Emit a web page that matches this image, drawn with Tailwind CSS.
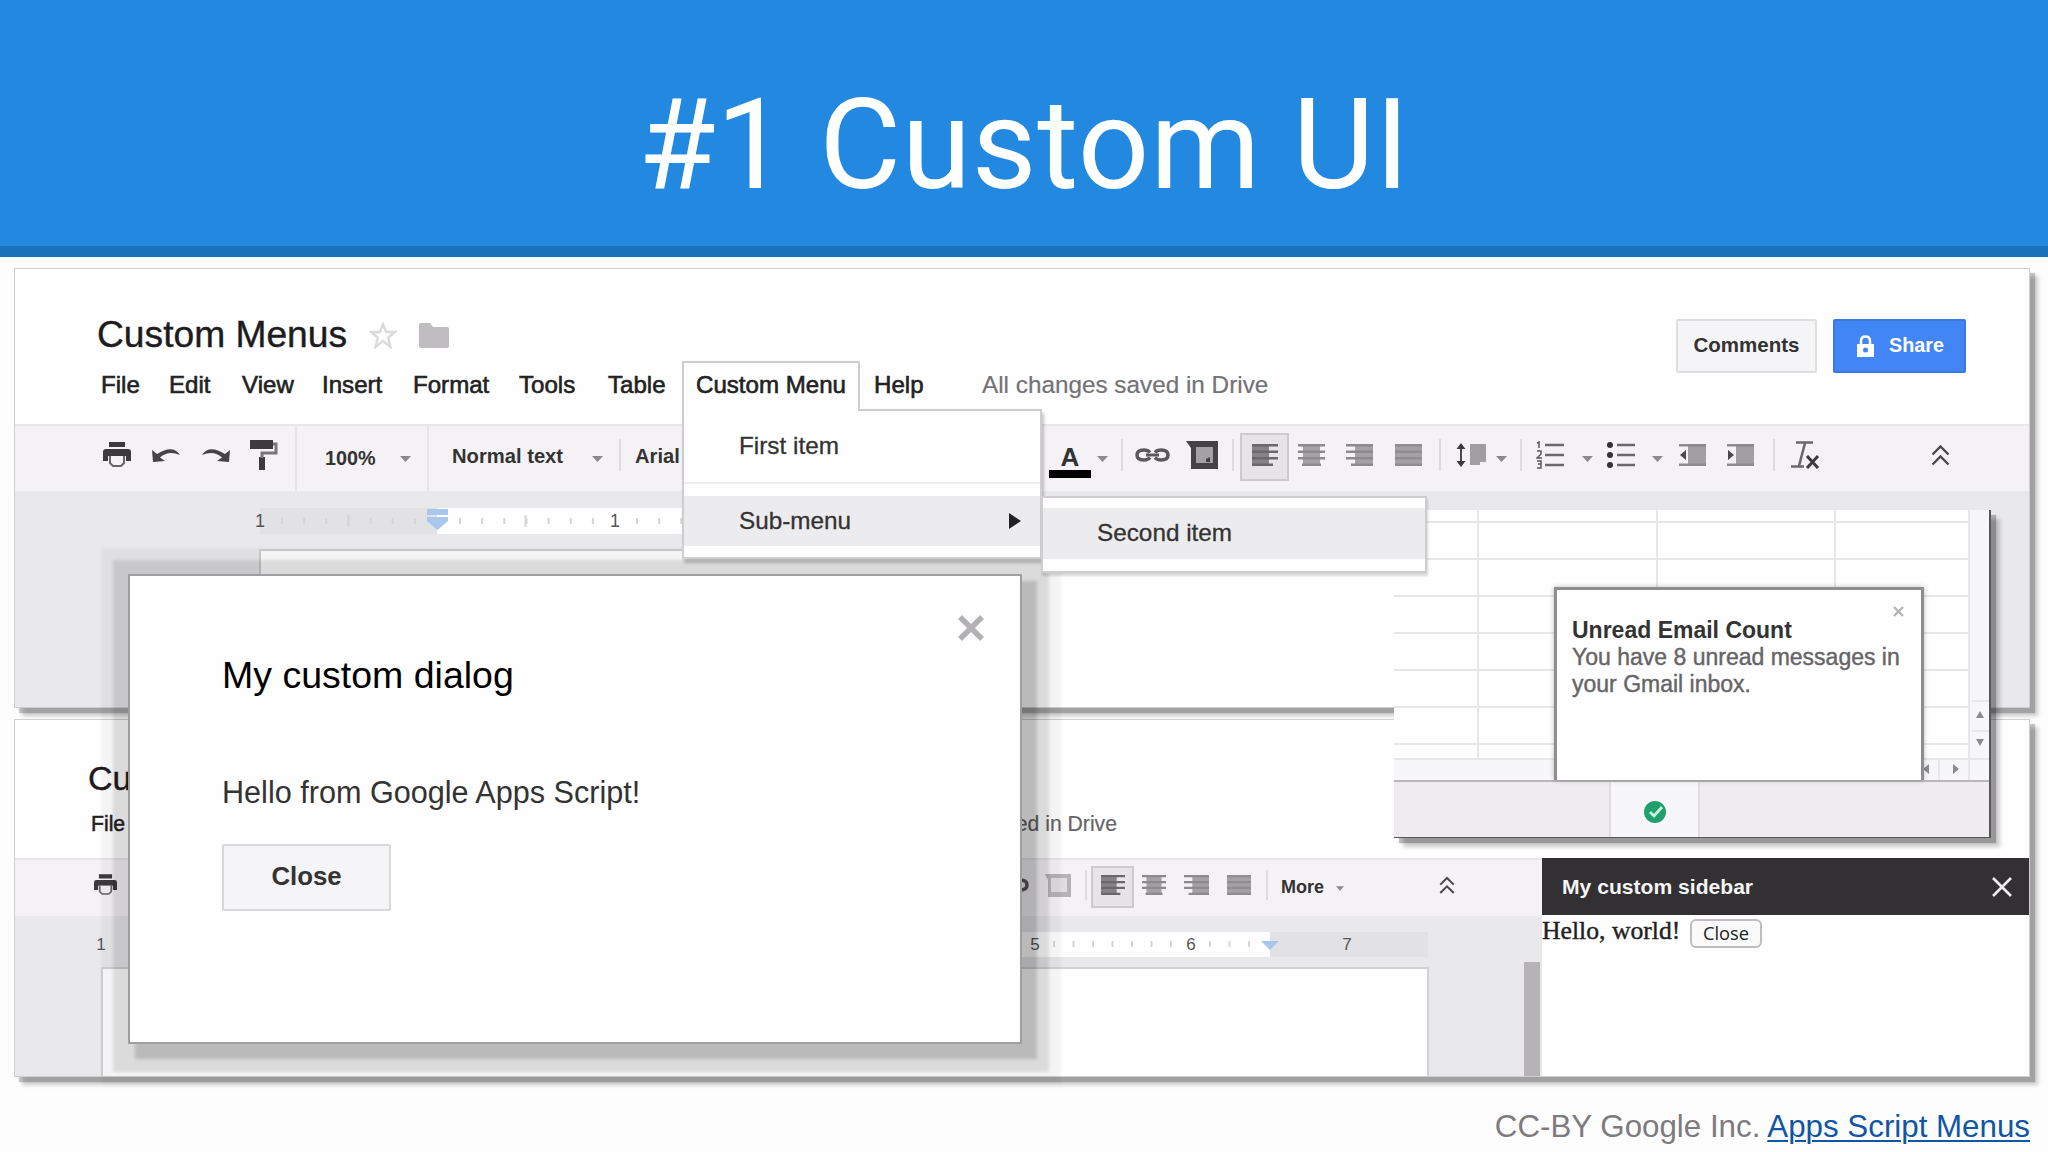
<!DOCTYPE html>
<html lang="en">
<head>
<meta charset="utf-8">
<title>#1 Custom UI</title>
<script src="https://cdn.jsdelivr.net/npm/@tailwindcss/browser@4"></script>
</head>
<body class="relative w-[2048px] h-[1152px] overflow-hidden bg-[#fdfdfd] font-['Liberation_Sans',Arial,sans-serif] leading-none text-[#222] whitespace-nowrap">

<!-- shared icons -->
<svg class="hidden">
  <symbol id="print" viewBox="0 0 28 26"><path fill="#3c3a3d" d="M6 0h16v5H6zM3 7h22q3 0 3 3v9h-5v-5H5v5H0v-9q0-3 3-3z"/><path d="M7 14v7l3 3h8l3-3v-7" fill="#f4f2f5" stroke="#666" stroke-width="2"/></symbol>
  <symbol id="undo" viewBox="0 0 30 18"><path fill="#444" d="M1 4l1 12 12-1-5-3.500Q17 4 29 9 22-2 6 8z"/></symbol>
  <symbol id="roller" viewBox="0 0 30 32"><path fill="#3c3a3d" d="M1 1h23v9H1zM10 18h6v13h-6z"/><path fill="none" stroke="#777" stroke-width="3" d="M24 5h3v9H13v5"/></symbol>
  <symbol id="caret" viewBox="0 0 11 6"><path fill="#8c8a8d" d="M0 0h11L5.500 6z"/></symbol>
  <symbol id="link" viewBox="0 0 35 14"><g fill="none" stroke="#5a585b" stroke-width="3.500"><path d="M15 4.500Q13 2 9 2 2 2 2 7t7 5q4 0 6-2.500M20 4.500Q22 2 26 2q7 0 7 5t-7 5q-4 0-6-2.500"/><path d="M11 7h13" stroke-width="3"/></g></symbol>
  <symbol id="comment" viewBox="0 0 32 28"><path fill="#444245" d="M0 0h32v28H5V7z"/><path fill="#a3a1a4" d="M10 6h17v16H10z"/><path fill="#444245" d="M20 18l4-2v5h-4z"/></symbol>
  <symbol id="left" viewBox="0 0 26 22" preserveAspectRatio="none"><path fill="#858386" d="M0 0h17v22H0z"/><path fill="#6a686b" d="M0 0h26v2.500H0zM0 6.500h26V9H0zM0 13h26v2.500H0zM0 19.500h21V22H0z"/></symbol>
  <symbol id="center" viewBox="0 0 27 22" preserveAspectRatio="none"><path fill="#a3a1a4" d="M5 0h17v22H5z"/><path fill="#8c8a8d" d="M0 0h27v2.500H0zM0 6.500h27V9H0zM0 13h27v2.500H0zM4 19.500h19V22H4z"/></symbol>
  <symbol id="right" viewBox="0 0 27 22" preserveAspectRatio="none"><path fill="#a3a1a4" d="M9 0h18v22H9z"/><path fill="#8c8a8d" d="M0 0h27v2.500H0zM0 6.500h27V9H0zM0 13h27v2.500H0zM5 19.500h22V22H5z"/></symbol>
  <symbol id="justify" viewBox="0 0 27 22" preserveAspectRatio="none"><path fill="#a3a1a4" d="M0 0h27v22H0z"/><path fill="#8f8d90" d="M0 0h27v2.500H0zM0 6.500h27V9H0zM0 13h27v2.500H0zM0 19.500h27V22H0z"/></symbol>
  <symbol id="spacing" viewBox="0 0 30 24"><path stroke="#4a484b" stroke-width="2" d="M5 2v20"/><path fill="#3c3a3d" d="M5 0l4.500 6h-9zM5 24l4.500-6h-9z"/><path fill="#a09ea1" d="M14 1h16v18h-6v3H14z"/></symbol>
  <symbol id="numbers" viewBox="0 0 28 28"><path stroke="#6a686b" stroke-width="2.500" d="M9 4h19M9 14h19M9 24h19"/><path fill="none" stroke="#5a585b" stroke-width="1.500" d="M1 2l2-1v6M1 10h4v3l-4 4h5M1 20h4v3H2h3v4H1"/></symbol>
  <symbol id="bullets" viewBox="0 0 28 28"><path stroke="#6a686b" stroke-width="2.500" d="M10 4h18M10 14h18M10 24h18"/><g fill="#333"><circle cx="3" cy="4" r="3"/><circle cx="3" cy="14" r="3"/><circle cx="3" cy="24" r="3"/></g></symbol>
  <symbol id="outdent" viewBox="0 0 27 22"><path fill="#a09ea1" d="M9 2h18v18H9z"/><path stroke="#8c8a8d" stroke-width="2.500" d="M0 1.300h27M0 20.700h27"/><path fill="#4a484b" d="M7 6v10l-6-5z"/></symbol>
  <symbol id="indent" viewBox="0 0 27 22"><path fill="#a09ea1" d="M9 2h18v18H9z"/><path stroke="#8c8a8d" stroke-width="2.500" d="M0 1.300h27M0 20.700h27"/><path fill="#4a484b" d="M1 6v10l6-5z"/></symbol>
  <symbol id="clear" viewBox="0 0 32 28"><path fill="none" stroke="#6a686b" stroke-width="2.600" d="M6 1.500h17M15 2L9 25M1 25.500h13"/><path stroke="#3c3a3d" stroke-width="3" d="M17 15l11 12M28 15L17 27"/></symbol>
  <symbol id="chevrons" viewBox="0 0 19 21"><path fill="none" stroke="#4a484b" stroke-width="2.400" d="M1.500 9.500l8-8 8 8M1.500 19.500l8-8 8 8"/></symbol>
</svg>

<!-- slide header -->
<header class="flex h-[257px] items-center justify-center border-b-[11px] border-[#1b73bb] bg-[#2388df] pt-[45px] font-['Roboto',sans-serif] text-[125.600px] tracking-[0.700px] text-white">
  <h1>#1 Custom UI</h1>
</header>

<!-- document with custom menu -->
<section class="absolute left-[14px] top-[268px] flex h-[440px] w-[2016px] flex-col border border-[#d0ced1] bg-[#fefefe] shadow-[5px_5px_1px_rgba(0,0,0,0.2),8px_8px_4px_rgba(0,0,0,0.2)]">
  <div class="flex h-[155px] justify-between">
    <div>
      <div class="mt-[45px] ml-[82px] flex h-[42px] items-center">
        <h2 class="w-[272px] text-[37.200px] text-[#1d1b1e] [-webkit-text-stroke:0.4px]">Custom Menus</h2>
        <svg class="h-[27px] w-[28px]" viewBox="0 0 28 27"><path fill="none" stroke="#dcdadd" stroke-width="2.400" d="M14 2l3.200 8H26l-6.800 5.500L21.500 25 14 19l-7.500 6 2.300-9.500L2 10h8.800z"/></svg>
        <svg class="ml-[22px] h-[25px] w-[30px]" viewBox="0 0 30 25"><path fill="#bfbdc0" d="M0 2q0-2 2-2h9l3 4h14q2 0 2 2v17q0 2-2 2H2q-2 0-2-2z"/></svg>
      </div>
      <nav class="mt-[4px] ml-[86px] flex h-[50px] items-center text-[24.100px] text-[#222] [-webkit-text-stroke:0.6px]">
        <span class="w-[68px]">File</span><span class="w-[73px]">Edit</span><span class="w-[80px]">View</span><span class="w-[91px]">Insert</span><span class="w-[106px]">Format</span><span class="w-[89px]">Tools</span><span class="w-[74px]">Table</span>
        <div class="relative h-[50px] w-[178px]">
          <div class="absolute inset-x-0 top-[1px] z-20 flex h-[50px] items-center border-2 border-b-0 border-[#cfcdd0] bg-[#fefefe] pb-[3px] pl-[12px]">Custom Menu</div>
          <div class="absolute left-0 top-[49px] z-10 h-[150px] w-[360px] border-2 border-[#cfcdd0] bg-[#fefefe] text-[24.300px] text-[#333] shadow-[2px_4px_3px_rgba(0,0,0,0.22)] [-webkit-text-stroke:0.3px]">
            <div class="flex h-[73px] items-center border-b-2 border-[#eeecef] pl-[55px]">First item</div>
            <div class="mt-[12px] flex h-[50px] items-center justify-between bg-[#ecebed] pr-[19px] pl-[55px]">Sub-menu
              <svg class="h-[16px] w-[12px]" viewBox="0 0 12 16"><path fill="#222" d="M0 0l12 8-12 8z"/></svg>
            </div>
            <div class="absolute left-[357px] top-[85px] h-[77px] w-[386px] border-2 border-[#cfcdd0] bg-[#fefefe] pt-[10px] shadow-[1px_3px_2px_rgba(0,0,0,0.15)]">
              <div class="flex h-[51px] items-center bg-[#ecebed] pl-[54px]">Second item</div>
            </div>
          </div>
        </div>
        <span class="ml-[14px] w-[108px]">Help</span>
        <span class="text-[24.300px] text-[#747275] [-webkit-text-stroke:0.2px]">All changes saved in Drive</span>
      </nav>
    </div>
    <div class="mt-[50px] mr-[63px] flex h-[54px] gap-[16px] text-[20.500px] font-bold">
      <button class="flex w-[141px] items-center justify-center rounded-xs border-2 border-[#dfdde0] bg-[#f5f4f6] pb-[1px] text-[#333]">Comments</button>
      <button class="flex w-[133px] items-center rounded-xs border-2 border-[#3b78e0] bg-[#4285f4] pl-[22px] text-[19.800px] text-white">
        <svg class="mr-[15px] h-[22px] w-[17px]" viewBox="0 0 17 22"><path fill="none" stroke="#fff" stroke-width="2.500" d="M4 10V6q0-4.500 4.500-4.500T13 6v4"/><path fill="#fff" d="M0 9h17v13H0z"/><circle cx="8.500" cy="15" r="2.500" fill="#4285f4"/></svg>Share
      </button>
    </div>
  </div>

  <div class="flex h-[67px] items-center border-t-2 border-[#e9e7ea] bg-[#f4f2f5] pb-[7px] text-[20.200px] font-bold text-[#333]">
    <svg class="ml-[88px] h-[26px] w-[28px]"><use href="#print"/></svg>
    <svg class="ml-[20px] h-[18px] w-[30px]"><use href="#undo"/></svg>
    <svg class="ml-[20px] h-[18px] w-[30px] -scale-x-100"><use href="#undo"/></svg>
    <svg class="ml-[18px] h-[32px] w-[30px]"><use href="#roller"/></svg>
    <i class="ml-[16px] mt-[7px] h-[65px] w-[2px] bg-[#e6e4e7]"></i>
    <span class="ml-[28px] mt-[7px] w-[75px] text-[19.800px]">100%</span>
    <svg class="mt-[7px] h-[6px] w-[11px]"><use href="#caret"/></svg>
    <i class="ml-[16px] mt-[7px] h-[65px] w-[2px] bg-[#e6e4e7]"></i>
    <span class="ml-[23px] mt-[3px] w-[140px]">Normal text</span>
    <svg class="mt-[7px] h-[6px] w-[11px]"><use href="#caret"/></svg>
    <i class="ml-[16px] h-[32px] w-[2px] bg-[#dddbde]"></i>
    <span class="ml-[14px] mt-[3px] w-[60px]">Arial</span>
    <span class="ml-[354px] mt-[12px] flex h-[34px] w-[42px] items-start justify-center border-b-[8px] border-black text-[26px] font-bold">A</span>
    <svg class="ml-[6px] mt-[7px] h-[6px] w-[11px]"><use href="#caret"/></svg>
    <i class="ml-[13px] h-[32px] w-[2px] bg-[#dddbde]"></i>
    <svg class="ml-[12px] h-[14px] w-[35px]"><use href="#link"/></svg>
    <svg class="ml-[16px] h-[28px] w-[32px]"><use href="#comment"/></svg>
    <i class="ml-[14px] h-[32px] w-[2px] bg-[#dddbde]"></i>
    <span class="ml-[6px] mt-[4px] flex h-[48px] w-[49px] items-center justify-center border-2 border-[#cccacd] bg-[#e6e4e7] pb-[5px]"><svg class="h-[22px] w-[26px]"><use href="#left"/></svg></span>
    <svg class="ml-[9px] h-[22px] w-[27px]"><use href="#center"/></svg>
    <svg class="ml-[21px] h-[22px] w-[27px]"><use href="#right"/></svg>
    <svg class="ml-[22px] h-[22px] w-[27px]"><use href="#justify"/></svg>
    <i class="ml-[17px] h-[32px] w-[2px] bg-[#dddbde]"></i>
    <svg class="ml-[15px] h-[24px] w-[30px]"><use href="#spacing"/></svg>
    <svg class="ml-[10px] mt-[7px] h-[6px] w-[11px]"><use href="#caret"/></svg>
    <i class="ml-[13px] h-[32px] w-[2px] bg-[#dddbde]"></i>
    <svg class="ml-[14px] h-[28px] w-[28px]"><use href="#numbers"/></svg>
    <svg class="ml-[18px] mt-[7px] h-[6px] w-[11px]"><use href="#caret"/></svg>
    <svg class="ml-[14px] h-[28px] w-[28px]"><use href="#bullets"/></svg>
    <svg class="ml-[17px] mt-[7px] h-[6px] w-[11px]"><use href="#caret"/></svg>
    <svg class="ml-[16px] h-[22px] w-[27px]"><use href="#outdent"/></svg>
    <svg class="ml-[21px] h-[22px] w-[27px]"><use href="#indent"/></svg>
    <i class="ml-[19px] h-[32px] w-[2px] bg-[#dddbde]"></i>
    <svg class="ml-[15px] h-[28px] w-[32px]"><use href="#clear"/></svg>
    <svg class="ml-[109px] h-[21px] w-[19px]"><use href="#chevrons"/></svg>
  </div>

  <div class="flex flex-1 flex-col bg-[#e9e8ea] pt-[17px] pl-[239px]">
    <svg class="h-[26px] w-[700px]" viewBox="0 0 700 26">
      <path fill="#e2e1e3" d="M6 0h177v26H6z"/><path fill="#fefefe" d="M183 0h517v26H183z"/>
      <path stroke="#d6d4d7" stroke-width="6" stroke-dasharray="2 20.150" d="M27 13h150M205 13h150M382 13h150"/>
      <path stroke="#d6d4d7" stroke-width="2" d="M94.500 7v12M271.500 7v12"/>
      <path fill="#a9c6ee" d="M173 1h21v6h-21zM173 9h21v4l-10.500 9L173 13z"/>
      <g font-size="18" fill="#555" text-anchor="middle"><text x="6" y="19">1</text><text x="361" y="19">1</text></g>
    </svg>
    <div class="mt-[15px] ml-[5px] w-[1640px] flex-1 border-t-2 border-l-2 border-[#cfcdd0] bg-[#fefefe]"></div>
  </div>
</section>

<!-- document with custom sidebar -->
<section class="absolute left-[14px] top-[719px] flex h-[358px] w-[2016px] flex-col border border-[#d0ced1] bg-[#fefefe] shadow-[5px_5px_1px_rgba(0,0,0,0.2),8px_8px_4px_rgba(0,0,0,0.2)]">
  <div class="h-[138px]">
    <h2 class="ml-[73px] mt-[41px] text-[34px] text-[#1d1b1e] [-webkit-text-stroke:0.4px]">Cu</h2>
    <div class="mt-[18px] ml-[76px] flex w-[1026px] justify-between text-[21.200px]">
      <span class="text-[#222] [-webkit-text-stroke:0.5px]">File</span>
      <span class="text-[#666467] [-webkit-text-stroke:0.2px]">ed in Drive</span>
    </div>
  </div>
  <div class="flex flex-1">
    <div class="flex w-[1527px] flex-col bg-[#e9e8ea]">
      <div class="flex h-[58px] items-center border-t-2 border-[#e9e7ea] bg-[#f4f2f5] pb-[6px] text-[18px] font-bold text-[#333]">
        <svg class="ml-[79px] h-[22px] w-[23px]"><use href="#print"/></svg>
        <svg class="ml-[877px] h-[14px] w-[35px]"><use href="#link"/></svg>
        <svg class="ml-[16px] h-[23px] w-[26px]" viewBox="0 0 26 23"><path fill="#b5b3b6" d="M0 0h26v23H3V6z"/><path fill="#dfdde0" d="M6 4h16v14H6z"/></svg>
        <i class="ml-[14px] h-[30px] w-[2px] bg-[#dddbde]"></i>
        <span class="ml-[4px] mt-[4px] flex h-[42px] w-[43px] items-center justify-center border-2 border-[#cccacd] bg-[#e6e4e7] pb-[4px]"><svg class="h-[20px] w-[24px]"><use href="#left"/></svg></span>
        <svg class="ml-[8px] h-[20px] w-[24px]"><use href="#center"/></svg>
        <svg class="ml-[18px] h-[20px] w-[25px]"><use href="#right"/></svg>
        <svg class="ml-[18px] h-[20px] w-[24px]"><use href="#justify"/></svg>
        <i class="ml-[15px] h-[30px] w-[2px] bg-[#dddbde]"></i>
        <span class="ml-[13px] mt-[3px] w-[55px]">More</span>
        <svg class="mt-[6px] h-[5px] w-[8px]"><use href="#caret"/></svg>
        <svg class="ml-[95px] h-[19px] w-[16px]"><use href="#chevrons"/></svg>
      </div>
      <svg class="mt-[16px] ml-[80px] h-[25px] w-[1340px]" viewBox="95 0 1340 25">
        <path fill="#fefefe" d="M200 0h1070v25H200z"/><path fill="#e2e1e3" d="M1270 0h158v25h-158z"/>
        <path stroke="#d6d4d7" stroke-width="6" stroke-dasharray="2 17.500" d="M1053 12h124M1209 12h48"/>
        <path fill="#a9c6ee" d="M1261 9h18l-9 9z"/>
        <g font-size="17" fill="#555" text-anchor="middle"><text x="101" y="18">1</text><text x="1035" y="18">5</text><text x="1191" y="18">6</text><text x="1347" y="18">7</text></g>
      </svg>
      <div class="flex flex-1 justify-between pr-[2px] pl-[86px]">
        <div class="mt-[10px] w-[1328px] border-2 border-b-0 border-[#d3d1d4] bg-[#fefefe]"></div>
        <div class="mt-[5px] w-[16px] bg-[#b5b3b6]"></div>
      </div>
    </div>
    <aside class="flex-1">
      <div class="flex h-[57px] items-center justify-between bg-[#333033] pr-[17px] pl-[20px] text-[21.100px] font-bold text-[#f5f5f5]">My custom sidebar
        <svg class="h-[20px] w-[20px]" viewBox="0 0 20 20"><path stroke="#eee" stroke-width="2.600" d="M1 1l18 18M19 1L1 19"/></svg>
      </div>
      <div class="flex items-start">
        <span class="mt-[3px] w-[148px] font-['Liberation_Serif',serif] text-[25.700px] [-webkit-text-stroke:0.4px]">Hello, world!</span>
        <button class="mt-[4px] flex h-[29px] w-[72px] items-center justify-center rounded-md border-2 border-[#bfbdc0] bg-[#fafafa] font-['Open_Sans',sans-serif] text-[18.300px] font-medium">Close</button>
      </div>
    </aside>
  </div>
</section>

<!-- spreadsheet with toast message -->
<section class="absolute left-[1394px] top-[510px] flex h-[328px] w-[597px] flex-col border-r-2 border-b border-[#59575a] bg-[#fefefe] shadow-[5px_5px_1px_rgba(0,0,0,0.25),9px_9px_4px_rgba(0,0,0,0.2)]">
  <svg class="h-[270px] w-[595px]" viewBox="0 0 595 270">
    <path fill="#f7f6f8" d="M0 250h595v21H0zM575 0h20v271h-20z"/>
    <path fill="none" stroke="#e8e6e9" stroke-width="2" d="M0 12h574M0 49h574M0 86h574M0 123h574M0 160h574M0 197h574M0 234h574M0 249h595M84 0v249M263 0v249M441 0v249M575 0v271M578 191h17M578 221h17M545 249v22"/>
    <path fill="#8c8a8d" d="M586 201l4 7h-8zM586 236l4-7h-8zM565 259l-6-5v10zM529 259l6-5v10z"/>
  </svg>
  <div class="flex flex-1 border-t-2 border-[#b9b7ba] bg-[#eeecef]">
    <div class="ml-[215px] flex w-[91px] items-center justify-center border-x-2 border-[#e0dee1] bg-[#f7f6f8]">
      <svg class="mt-[4px] h-[22px] w-[22px]" viewBox="0 0 22 22"><circle cx="11" cy="11" r="11" fill="#22a06b"/><path fill="none" stroke="#c9f5de" stroke-width="2.800" d="M6 11l4 4 8-9"/></svg>
    </div>
  </div>
  <div class="absolute left-[160px] top-[77px] h-[193px] w-[370px] border-[3px] border-b-0 border-[#8f8d90] bg-[#fefefe] pt-[27px] pl-[15px] text-[23px] leading-[27px] text-[#666467] shadow-[0_0_5px_rgba(0,0,0,0.25)]">
    <p class="font-bold text-[#333]">Unread Email Count</p>
    <p class="[-webkit-text-stroke:0.4px]">You have 8 unread messages in<br>your Gmail inbox.</p>
    <svg class="absolute right-[17px] top-[16px] h-[11px] w-[11px]" viewBox="0 0 11 11"><path stroke="#b5b3b6" stroke-width="2.400" d="M1 1l9 9M10 1l-9 9"/></svg>
  </div>
</section>

<!-- custom dialog -->
<section class="absolute left-[128px] top-[574px] h-[470px] w-[894px] border-2 border-[#a09ea1] bg-[#fefefe] pl-[92px] shadow-[11px_11px_3px_4px_rgba(0,0,0,0.15),6px_7px_3px_21px_rgba(0,0,0,0.10),6px_7px_3px_33px_rgba(0,0,0,0.04)]">
  <h2 class="mt-[81px] text-[37.500px] text-black">My custom dialog</h2>
  <p class="mt-[82px] text-[30.600px] text-[#333]">Hello from Google Apps Script!</p>
  <button class="mt-[37px] flex h-[67px] w-[169px] items-center justify-center rounded-xs border-2 border-[#d9d7da] bg-[#f5f4f6] pb-[1px] text-[25.800px] font-bold text-[#333]">Close</button>
  <svg class="absolute right-[36px] top-[39px] h-[26px] w-[26px]" viewBox="0 0 26 26"><path stroke="#b3b1b4" stroke-width="5.500" d="M2 2l22 22M24 2L2 24"/></svg>
</section>

<!-- attribution -->
<footer class="absolute right-[18px] top-[1111px] text-[31.300px] text-[#7d7b7e]">CC-BY Google Inc. <a class="text-[#1155a5] underline decoration-2 underline-offset-[3px]">Apps Script Menus</a></footer>
</body>
</html>
